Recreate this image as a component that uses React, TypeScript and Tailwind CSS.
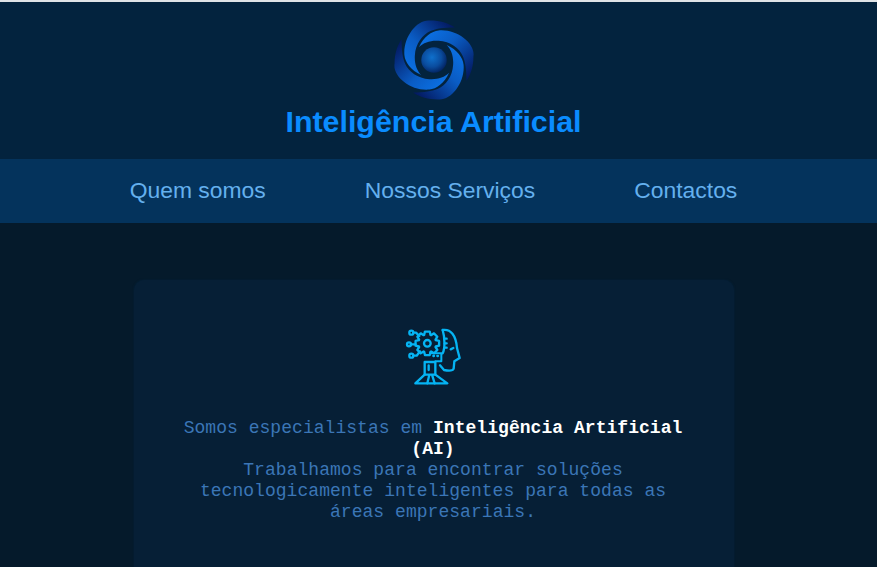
const navItems = ["Quem somos", "Nossos Serviços", "Contactos"]

const Logo = () => (
   <svg width="80" height="80" viewBox="-34.5 -34.5 69 69">
      <defs>
         <linearGradient id="blade" gradientUnits="userSpaceOnUse" x1="-8" y1="-24" x2="32" y2="16">
            <stop offset="0" stopColor="#0b72e6" />
            <stop offset="0.4" stopColor="#0a5cc4" />
            <stop offset="1" stopColor="#03155a" />
         </linearGradient>
         <radialGradient id="ball" cx="0.42" cy="0.4" r="0.62">
            <stop offset="0" stopColor="#0f70cc" />
            <stop offset="0.6" stopColor="#0a4c9e" />
            <stop offset="1" stopColor="#032463" />
         </radialGradient>
      </defs>
      {[0, 90, 180, 270].map(angle => (
         <path
            key={angle}
            transform={`rotate(${angle})`}
            fill="url(#blade)"
            d="M-13 -11C-9 -20 -2 -25 4 -25.5C20 -27 36 -14 34 -3C34 5 32 12 28 18C28 8 27 2 25 -3C22 -10 14 -16 4 -16.5C-3 -17 -9 -15 -13 -11Z"
         />
      ))}
      <circle cx="0" cy="0" r="11" fill="url(#ball)" />
   </svg>
)

const gearPath = () => {
   const cx = 100
   const cy = 70
   const points: string[] = []
   for (let i = 0; i < 8; i++) {
      const a = (i * Math.PI) / 4 - Math.PI / 2
      const spread = [
         [-0.36, 27],
         [-0.2, 36],
         [0.2, 36],
         [0.36, 27],
      ]
      spread.forEach(([d, r]) => {
         points.push(`${(cx + Math.cos(a + d) * r).toFixed(1)} ${(cy + Math.sin(a + d) * r).toFixed(1)}`)
      })
   }
   return `M${points.join("L")}Z`
}

const AiHead = () => (
   <svg
      width="80"
      height="75"
      viewBox="0 0 240 225"
      fill="none"
      stroke="#05b4f4"
      strokeWidth="7"
      strokeLinecap="round"
      strokeLinejoin="round"
   >
      {/* head */}
      <path d="M146 30C170 26 186 46 189 84L197 114L181 124L179 146C176 154 160 152 150 150L138 136" />
      <path d="M146 30C152 50 154 84 146 100" />
      <path d="M170 88L178 84" />
      {/* gear */}
      <path d={gearPath()} />
      <circle cx="100" cy="70" r="10" />
      {/* circuit */}
      <circle cx="52" cy="38" r="6" />
      <circle cx="45" cy="73" r="6" />
      <circle cx="52" cy="107" r="6" />
      <path d="M58 38H66L76 48" />
      <path d="M51 73H64" />
      <path d="M58 107H68L78 94" />
      <path d="M152 56H158M152 70H158M152 83H158" />
      {/* chip */}
      <path d="M108 100H142V124H124" strokeWidth="6" />
      <path d="M118 108H120M130 108H132" />
      {/* column */}
      <path d="M92 126H124V164L160 190H64L92 164Z" />
      <path d="M104 136V150M92 164H124M106 164L100 190M114 164L122 190" />
   </svg>
)

export default function App() {
   return (
      <div className="h-[567px] overflow-hidden bg-[#051a2b] font-['Liberation_Sans',Arial,sans-serif]">
         <header className="flex flex-col items-center border-t-2 border-[#dfe3e6] bg-[#03233e] pr-[10px] pt-[18px]">
            <Logo />
            <h1 className="mt-[3px] h-[56px] text-[30.4px] font-bold leading-[36px] text-[#0a8cff]">
               Inteligência Artificial
            </h1>
         </header>
         <nav className="flex h-[64px] items-center justify-center gap-[99px] bg-[#04335c] pb-[1px] pr-[10px]">
            {navItems.map(item => (
               <a key={item} className="text-[22.9px] text-[#64b0ee]">
                  {item}
               </a>
            ))}
         </nav>
         <main className="flex justify-center pr-[9px] pt-[57px]">
            <section className="flex h-[400px] w-[600px] flex-col items-center rounded-[10px] bg-[#061f36] px-[40px] pt-[40px] shadow-[0_0_2px_rgba(4,40,70,0.6)]">
               <AiHead />
               <p className="mt-[23px] pr-[2px] text-center font-['Liberation_Mono','Courier_New',monospace] text-[18px] leading-[21px] tracking-[0.04px] text-[#3b76b6]">
                  Somos especialistas em <strong className="font-bold text-white">Inteligência Artificial (AI)</strong>
                  <br />
                  Trabalhamos para encontrar soluções tecnologicamente inteligentes para todas as áreas empresariais.
               </p>
            </section>
         </main>
      </div>
   )
}
